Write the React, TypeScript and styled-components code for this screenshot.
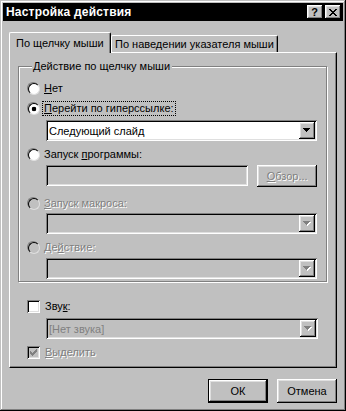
import styled, { createGlobalStyle, css } from 'styled-components';

const GlobalStyle = createGlobalStyle`
  html, body {
    margin: 0;
    padding: 0;
    background: #c0c0c0;
  }

  body {
    color: #000;
    font-family: "Liberation Sans", Arial, sans-serif;
    font-size: 11px;
  }

  * {
    box-sizing: border-box;
  }
`;

const raised = css`
  box-shadow:
    inset -1px -1px #000,
    inset 1px 1px #fff,
    inset -2px -2px #808080,
    inset 2px 2px #dfdfdf;
`;

const sunken = css`
  box-shadow:
    inset 1px 1px #808080,
    inset -1px -1px #fff,
    inset 2px 2px #000,
    inset -2px -2px #dfdfdf;
`;

const disabledText = css`
  color: #808080;
  text-shadow: 1px 1px 0 #fff;
`;

const S = {
  Window: styled.div`
    background: #c0c0c0;
    box-shadow:
      inset -1px -1px #000,
      inset 1px 1px #c0c0c0,
      inset -2px -2px #808080,
      inset 2px 2px #fff;
    display: flex;
    flex-direction: column;
    height: 411px;
    padding: 3px;
    width: 346px;
  `,

  TitleBar: styled.div`
    align-items: center;
    background: #000;
    color: #fff;
    display: flex;
    height: 18px;
    justify-content: space-between;
    padding: 0 2px 0 3px;
  `,

  Title: styled.span`
    font-size: 12px;
    font-weight: 700;
    letter-spacing: 0.2px;
  `,

  TitleButtons: styled.div`
    display: flex;
    gap: 2px;
  `,

  TitleButton: styled.div`
    ${raised};
    align-items: center;
    background: #c0c0c0;
    color: #000;
    cursor: default;
    display: flex;
    font-size: 11px;
    font-weight: 700;
    height: 14px;
    justify-content: center;
    line-height: 14px;
    padding-right: 1px;
    width: 16px;
  `,

  Body: styled.div`
    display: flex;
    flex: 1;
    flex-direction: column;
    padding: 11px 6px 0;
  `,

  TabStrip: styled.div`
    align-items: flex-end;
    display: flex;
    height: 21px;
    margin-bottom: -1px;
  `,

  Tab: styled.div<{ $active?: boolean; $width: number }>`
    align-items: center;
    background: #c0c0c0;
    border-left: 1px solid #fff;
    border-radius: 2px 2px 0 0;
    border-right: 1px solid #000;
    border-top: 1px solid #fff;
    box-shadow: inset -1px 0 #808080;
    display: flex;
    padding-left: ${({ $active }) => ($active ? 6 : 3)}px;
    width: ${({ $width }) => $width}px;
    ${({ $active }) =>
      $active
        ? css`
            height: 21px;
            padding-bottom: 1px;
            position: relative;
            z-index: 2;
          `
        : css`
            height: 18px;
            padding-bottom: 1px;
          `}
  `,

  Panel: styled.div`
    background: #c0c0c0;
    border-bottom: 1px solid #000;
    border-left: 1px solid #fff;
    border-right: 1px solid #000;
    border-top: 1px solid #fff;
    box-shadow: inset -1px -1px #808080;
    height: 316px;
    padding: 7px 9px 0 8px;
    position: relative;
    z-index: 1;
  `,

  Group: styled.fieldset`
    border: 1px solid #808080;
    box-shadow:
      inset 1px 1px #fff,
      1px 1px #fff;
    margin: 0;
    min-width: 0;
    padding: 7px 9px 2px 8px;
  `,

  Legend: styled.legend`
    background: #c0c0c0;
    line-height: 13px;
    margin-left: 5px;
    padding: 0 2px 0 1px;
  `,

  Row: styled.label<{ $top: number; $disabled?: boolean }>`
    align-items: center;
    display: flex;
    gap: 5px;
    height: 16px;
    margin-top: ${({ $top }) => $top}px;
    ${({ $disabled }) => $disabled && disabledText};
  `,

  Focus: styled.span`
    line-height: 13px;
    margin-left: -1px;
    outline: 1px dotted #000;
    outline-offset: 0;
    padding: 0 1px;
  `,

  Radio: styled.span<{ $checked?: boolean; $disabled?: boolean }>`
    border: 1px solid;
    border-color: #808080 #fff #fff #808080;
    border-radius: 50%;
    flex: none;
    height: 12px;
    width: 12px;

    &::before {
      background: ${({ $checked, $disabled }) =>
        $checked
          ? 'radial-gradient(circle, #000 0 2px, #fff 2.6px)'
          : $disabled
            ? '#c0c0c0'
            : '#fff'};
      border: 1px solid;
      border-color: #000 #dfdfdf #dfdfdf #000;
      border-radius: 50%;
      content: '';
      display: block;
      height: 10px;
      width: 10px;
    }
  `,

  Indent: styled.div<{ $top: number }>`
    display: flex;
    gap: 9px;
    margin-left: 19px;
    margin-top: ${({ $top }) => $top}px;
  `,

  Combo: styled.div<{ $disabled?: boolean; $width: number }>`
    ${sunken};
    align-items: center;
    background: ${({ $disabled }) => ($disabled ? '#c0c0c0' : '#fff')};
    color: ${({ $disabled }) => ($disabled ? '#808080' : '#000')};
    display: flex;
    height: 21px;
    padding: 2px;
    width: ${({ $width }) => $width}px;
  `,

  ComboText: styled.span`
    flex: 1;
    padding-left: 1px;
  `,

  DropButton: styled.div`
    ${raised};
    align-items: center;
    background: #c0c0c0;
    display: flex;
    flex: none;
    height: 17px;
    justify-content: center;
    width: 16px;
  `,

  TextField: styled.div<{ $width: number }>`
    ${sunken};
    background: #c0c0c0;
    height: 21px;
    width: ${({ $width }) => $width}px;
  `,

  Button: styled.button<{ $default?: boolean; $disabled?: boolean; $width: number; $height: number }>`
    all: unset;
    align-items: center;
    background: #c0c0c0;
    box-sizing: border-box;
    display: flex;
    font-family: "Liberation Sans", Arial, sans-serif;
    font-size: 11px;
    height: ${({ $height }) => $height}px;
    justify-content: center;
    width: ${({ $width }) => $width}px;
    ${({ $default }) =>
      $default
        ? css`
            border: 1px solid #000;
            box-shadow:
              inset -1px -1px #000,
              inset 1px 1px #fff,
              inset -2px -2px #808080,
              inset 2px 2px #dfdfdf;
          `
        : raised};
    ${({ $disabled }) => $disabled && disabledText};
  `,

  Section: styled.div`
    padding-left: 9px;
  `,

  Checkbox: styled.span<{ $disabled?: boolean }>`
    ${sunken};
    align-items: center;
    background: ${({ $disabled }) => ($disabled ? '#c0c0c0' : '#fff')};
    display: flex;
    flex: none;
    height: 13px;
    justify-content: center;
    width: 13px;
  `,

  Footer: styled.div`
    display: flex;
    gap: 9px;
    justify-content: flex-end;
    margin-top: 11px;
  `,
};

function Arrow({ disabled }: { disabled?: boolean }) {
  const d = 'M0 0h7v1H0z M1 1h5v1H1z M2 2h3v1H2z M3 3h1v1H3z';
  return (
    <svg width="8" height="5" viewBox="0 0 8 5" shapeRendering="crispEdges">
      {disabled && <path d={d} fill="#fff" transform="translate(1 1)" />}
      <path d={d} fill={disabled ? '#808080' : '#000'} />
    </svg>
  );
}

function Check({ color }: { color: string }) {
  return (
    <svg width="7" height="7" viewBox="0 0 7 7" shapeRendering="crispEdges">
      <path
        d="M6 0h1v3H6z M5 1h1v3H5z M4 2h1v3H4z M3 3h1v3H3z M2 4h1v3H2z M1 3h1v3H1z M0 2h1v3H0z"
        fill={color}
      />
    </svg>
  );
}

function CloseGlyph() {
  return (
    <svg width="8" height="7" viewBox="0 0 8 7" shapeRendering="crispEdges">
      <path
        d="M0 0h2v1H0z M6 0h2v1H6z M1 1h2v1H1z M5 1h2v1H5z M2 2h4v1H2z M3 3h2v1H3z M2 4h4v1H2z M1 5h2v1H1z M5 5h2v1H5z M0 6h2v1H0z M6 6h2v1H6z"
        fill="#000"
      />
    </svg>
  );
}

export default function App() {
  return (
    <>
      <GlobalStyle />
      <S.Window>
        <S.TitleBar>
          <S.Title>Настройка действия</S.Title>
          <S.TitleButtons>
            <S.TitleButton aria-label="Справка">?</S.TitleButton>
            <S.TitleButton aria-label="Закрыть">
              <CloseGlyph />
            </S.TitleButton>
          </S.TitleButtons>
        </S.TitleBar>

        <S.Body>
          <S.TabStrip>
            <S.Tab $active $width={102}>
              По щелчку мыши
            </S.Tab>
            <S.Tab $width={167}>По наведении указателя мыши</S.Tab>
          </S.TabStrip>

          <S.Panel>
            <S.Group>
              <S.Legend>Действие по щелчку мыши</S.Legend>

              <S.Row $top={0}>
                <S.Radio />
                <span>
                  <u>Н</u>ет
                </span>
              </S.Row>
              <S.Row $top={4}>
                <S.Radio $checked />
                <S.Focus>
                  <u>П</u>ерейти по гиперссылке:
                </S.Focus>
              </S.Row>
              <S.Indent $top={4}>
                <S.Combo $width={271}>
                  <S.ComboText>Следующий слайд</S.ComboText>
                  <S.DropButton>
                    <Arrow />
                  </S.DropButton>
                </S.Combo>
              </S.Indent>

              <S.Row $top={5}>
                <S.Radio />
                <span>
                  Запуск <u>п</u>рограммы:
                </span>
              </S.Row>
              <S.Indent $top={3}>
                <S.TextField $width={203} />
                <S.Button $disabled $width={60} $height={22}>
                  <span>
                    <u>О</u>бзор...
                  </span>
                </S.Button>
              </S.Indent>

              <S.Row $top={8} $disabled>
                <S.Radio $disabled />
                <span>
                  <u>З</u>апуск макроса:
                </span>
              </S.Row>
              <S.Indent $top={2}>
                <S.Combo $disabled $width={271}>
                  <S.ComboText />
                  <S.DropButton>
                    <Arrow disabled />
                  </S.DropButton>
                </S.Combo>
              </S.Indent>

              <S.Row $top={5} $disabled>
                <S.Radio $disabled />
                <span>
                  Де<u>й</u>ствие:
                </span>
              </S.Row>
              <S.Indent $top={3}>
                <S.Combo $disabled $width={271}>
                  <S.ComboText />
                  <S.DropButton>
                    <Arrow disabled />
                  </S.DropButton>
                </S.Combo>
              </S.Indent>
            </S.Group>

            <S.Section>
              <S.Row $top={16}>
                <S.Checkbox />
                <span>
                  Зву<u>к</u>:
                </span>
              </S.Row>
              <S.Indent $top={4}>
                <S.Combo $disabled $width={272}>
                  <S.ComboText>[Нет звука]</S.ComboText>
                  <S.DropButton>
                    <Arrow disabled />
                  </S.DropButton>
                </S.Combo>
              </S.Indent>
              <S.Row $top={5} $disabled>
                <S.Checkbox $disabled>
                  <Check color="#808080" />
                </S.Checkbox>
                <span>
                  <u>В</u>ыделить
                </span>
              </S.Row>
            </S.Section>
          </S.Panel>

          <S.Footer>
            <S.Button $default $width={60} $height={24}>
              ОК
            </S.Button>
            <S.Button $width={60} $height={24}>
              Отмена
            </S.Button>
          </S.Footer>
        </S.Body>
      </S.Window>
    </>
  );
}
